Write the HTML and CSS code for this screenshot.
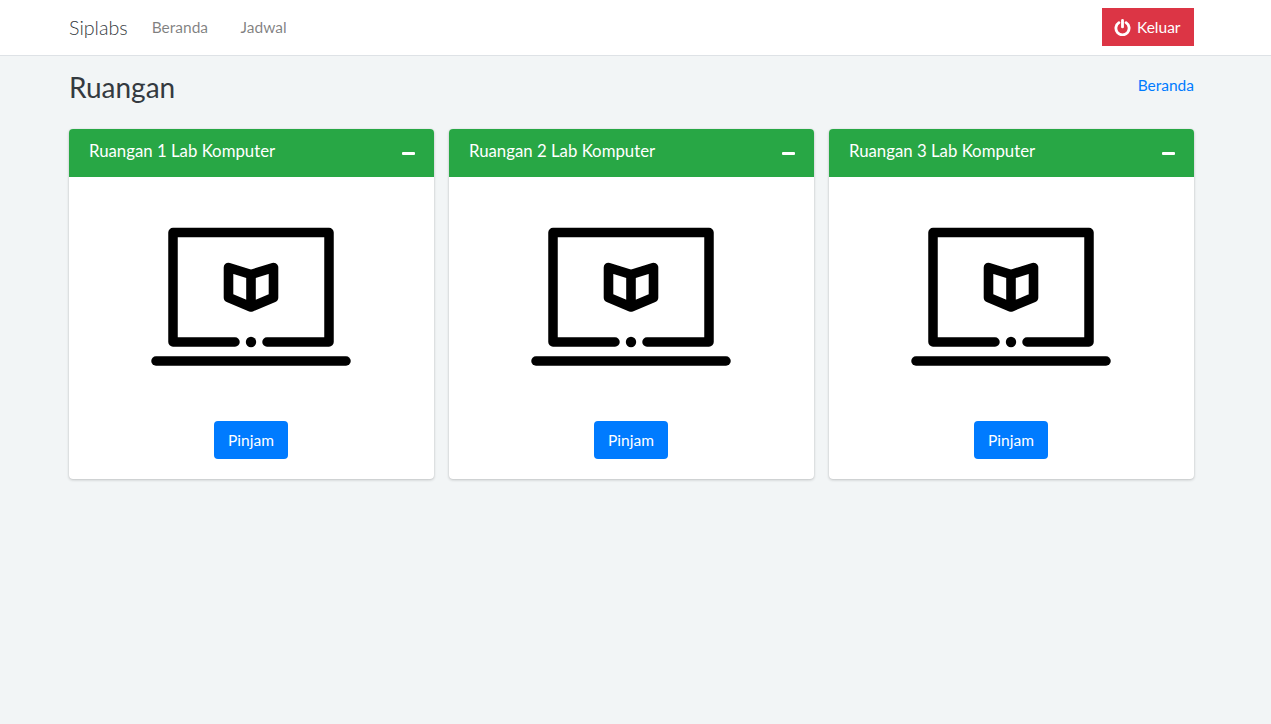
FILE: index.html
```html
<!DOCTYPE html>
<html lang="id">
<head>
    <meta charset="UTF-8">
    <meta name="viewport" content="width=device-width, initial-scale=1.0">
    <title>Siplabs</title>
    <link rel="stylesheet" href="styles.css">
</head>
<body>
    <svg class="defs" width="0" height="0">
        <symbol id="ikon-lab" viewBox="0 0 200 200">
            <path d="M84 145H22V35.5H178V145H116" fill="none" stroke="#000" stroke-width="9.5" stroke-linecap="round" stroke-linejoin="round"/>
            <circle cx="100" cy="145" r="5.2" fill="#000"/>
            <path d="M5 164H195" fill="none" stroke="#000" stroke-width="9.5" stroke-linecap="round"/>
            <path d="M77.5 70.5L100 77.5L122.5 70.5V100.5L100 110L77.5 100.5ZM100 77.5V110" fill="none" stroke="#000" stroke-width="9.6" stroke-linecap="round" stroke-linejoin="round"/>
        </symbol>
    </svg>

    <nav class="navbar">
        <a class="brand" href="#">Siplabs</a>
        <a class="nav-link" href="#">Beranda</a>
        <a class="nav-link" href="#">Jadwal</a>
        <a class="btn-keluar" href="#">
            <svg class="ikon-power" viewBox="0 0 18 18" width="17" height="17">
                <path d="M5.2 3.9A7 7 0 1 0 12.8 3.9" fill="none" stroke="#fff" stroke-width="3" stroke-linecap="round"/>
                <path d="M9 1.6V8.4" fill="none" stroke="#fff" stroke-width="3" stroke-linecap="round"/>
            </svg>
            Keluar
        </a>
    </nav>

    <div class="konten">
        <div class="judul-baris">
            <h1>Ruangan</h1>
            <a href="#">Beranda</a>
        </div>

        <div class="daftar-ruangan">
            <div class="card">
                <div class="card-header">
                    <h3>Ruangan 1 Lab Komputer</h3>
                    <span class="minus"></span>
                </div>
                <div class="card-body">
                    <svg class="ikon-lab"><use href="#ikon-lab"/></svg>
                    <a class="btn-pinjam" href="#">Pinjam</a>
                </div>
            </div>

            <div class="card">
                <div class="card-header">
                    <h3>Ruangan 2 Lab Komputer</h3>
                    <span class="minus"></span>
                </div>
                <div class="card-body">
                    <svg class="ikon-lab"><use href="#ikon-lab"/></svg>
                    <a class="btn-pinjam" href="#">Pinjam</a>
                </div>
            </div>

            <div class="card">
                <div class="card-header">
                    <h3>Ruangan 3 Lab Komputer</h3>
                    <span class="minus"></span>
                </div>
                <div class="card-body">
                    <svg class="ikon-lab"><use href="#ikon-lab"/></svg>
                    <a class="btn-pinjam" href="#">Pinjam</a>
                </div>
            </div>
        </div>
    </div>
</body>
</html>
```

FILE: styles.css
```css
* {
    box-sizing: border-box;
}

body {
    font-family: Lato, "Open Sans", sans-serif;
    font-size: 15.5px;
    background-color: #f2f5f6;
    color: #343a40;
    margin: 0;
    min-height: 100vh;
}

a {
    text-decoration: none;
}

.defs {
    display: block;
    height: 0;
}

.navbar {
    display: flex;
    align-items: center;
    height: 56px;
    padding: 0 77px 1px 69px;
    background-color: white;
    border-bottom: 1px solid #dee2e6;
}

.brand {
    font-size: 19.7px;
    font-weight: 300;
    color: #343a40;
    margin-right: 8px;
}

.nav-link {
    padding: 0 16.5px 0 16px;
    color: rgba(0,0,0,0.5);
}

.btn-keluar {
    display: flex;
    align-items: center;
    gap: 6px;
    width: 92px;
    height: 38px;
    margin-left: auto;
    padding: 0 12px;
    background-color: #dc3545;
    color: white;
}

.konten {
    padding: 0 77px 0 69px;
}

.judul-baris {
    display: flex;
    justify-content: space-between;
    padding-top: 13px;
    height: 73px;
}

h1 {
    font-size: 28px;
    font-weight: 400;
    line-height: 36px;
    margin: 0;
}

.judul-baris a {
    color: #007bff;
    line-height: 33px;
}

.daftar-ruangan {
    display: grid;
    grid-template-columns: repeat(3, 1fr);
    gap: 15px;
}

.card {
    background-color: white;
    border-radius: 4px;
    box-shadow: 0 0 1px rgba(0,0,0,0.125), 0 1px 3px rgba(0,0,0,0.2);
}

.card-header {
    display: flex;
    justify-content: space-between;
    align-items: center;
    height: 48px;
    padding: 0 19px 0 20px;
    background-color: #28a745;
    border-radius: 4px 4px 0 0;
    color: white;
}

.card-header h3 {
    font-size: 16.8px;
    font-weight: 400;
    margin: 0 0 5px;
}

.minus {
    width: 13px;
    height: 3px;
    margin-top: 1px;
    background-color: white;
    border-radius: 1px;
}

.card-body {
    display: flex;
    flex-direction: column;
    align-items: center;
    padding: 20px 21px 20px 20px;
}

.ikon-lab {
    width: 200px;
    height: 200px;
    margin-bottom: 24px;
}

.btn-pinjam {
    display: flex;
    align-items: center;
    justify-content: center;
    width: 74px;
    height: 38px;
    padding-bottom: 1px;
    background-color: #007bff;
    border-radius: 4px;
    color: white;
}
```
